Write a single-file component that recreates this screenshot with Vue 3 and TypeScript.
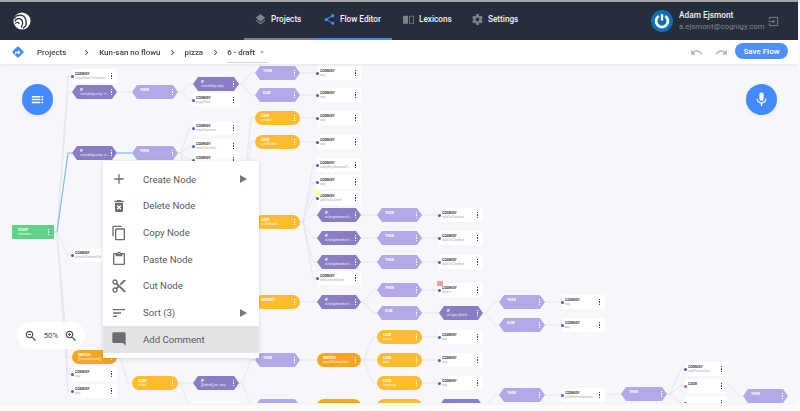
<script setup lang="ts">
type Kind = 'cog' | 'cook' | 'then' | 'if' | 'case' | 'switch' | 'start'
interface FlowNode { id: string; kind: Kind; col: number; cy: number; label: string; sub: string; parent?: string; active?: boolean }

const columns: [number, number][] = [
  [12, 42], [72, 45], [132, 46], [193, 46], [255, 45], [317, 44], [377, 45],
  [439, 44], [499, 46], [562, 43], [621, 46], [685, 42], [743, 45]
]
const TOP = 64

const nodes: FlowNode[] = [
  { id: 'start', kind: 'start', col: 0, cy: 232, label: 'START', sub: 'intentes' },
  { id: 'a1', kind: 'cog', col: 1, cy: 76, label: 'COGNIGY', sub: 'copyDataToContext', parent: 'start' },
  { id: 'a2', kind: 'if', col: 1, cy: 92, label: 'IF', sub: '<cmdelsp.city> +...', parent: 'start' },
  { id: 'a3', kind: 'if', col: 1, cy: 153, label: 'IF', sub: '<cmdelsp.city> =...', parent: 'start', active: true },
  { id: 'a4', kind: 'cog', col: 1, cy: 255, label: 'COGNIGY', sub: 'checkChannelOn', parent: 'start' },
  { id: 'a5', kind: 'switch', col: 1, cy: 357, label: 'SWITCH', sub: '[[currentState]]', parent: 'start' },
  { id: 'a6', kind: 'cog', col: 1, cy: 374, label: 'COGNIGY', sub: 'say', parent: 'start' },
  { id: 'a7', kind: 'cog', col: 1, cy: 391, label: 'COGNIGY', sub: 'say', parent: 'start' },

  { id: 'b1', kind: 'then', col: 2, cy: 92, label: 'THEN', sub: '', parent: 'a2' },
  { id: 'b2', kind: 'then', col: 2, cy: 153, label: 'THEN', sub: '', parent: 'a3', active: true },
  { id: 'b3', kind: 'case', col: 2, cy: 383, label: 'CASE', sub: 'order', parent: 'a5' },

  { id: 'c1', kind: 'if', col: 3, cy: 84, label: 'IF', sub: '<cmdelsp.city>', parent: 'b1' },
  { id: 'c2', kind: 'cog', col: 3, cy: 100, label: 'COGNIGY', sub: 'copyPlain', parent: 'b1' },
  { id: 'c3', kind: 'cog', col: 3, cy: 128, label: 'COGNIGY', sub: 'resetContext', parent: 'b2' },
  { id: 'c4', kind: 'cog', col: 3, cy: 146, label: 'COGNIGY', sub: 'resetContext', parent: 'b2' },
  { id: 'c5', kind: 'cog', col: 3, cy: 160, label: 'COGNIGY', sub: '', parent: 'b2' },
  { id: 'c6', kind: 'switch', col: 3, cy: 210, label: '', sub: '', parent: 'b2' },
  { id: 'c7', kind: 'if', col: 3, cy: 383, label: 'IF', sub: '[[intent]] == \'any...', parent: 'b3' },
  { id: 'c8', kind: 'cog', col: 3, cy: 408, label: '', sub: '', parent: 'b3' },

  { id: 'd1', kind: 'then', col: 4, cy: 73, label: 'THEN', sub: '', parent: 'c1' },
  { id: 'd2', kind: 'then', col: 4, cy: 95, label: 'ELSE', sub: '', parent: 'c1' },
  { id: 'd3', kind: 'case', col: 4, cy: 118, label: 'CASE', sub: 'empty1', parent: 'c6' },
  { id: 'd4', kind: 'case', col: 4, cy: 142, label: 'CASE', sub: 'wantOrder', parent: 'c6' },
  { id: 'd5', kind: 'case', col: 4, cy: 222, label: 'CASE', sub: 'orderFood', parent: 'c6' },
  { id: 'd6', kind: 'case', col: 4, cy: 302, label: 'DEFAULT', sub: '', parent: 'c6' },
  { id: 'd7', kind: 'then', col: 4, cy: 360, label: 'THEN', sub: '', parent: 'c7' },
  { id: 'd8', kind: 'then', col: 4, cy: 406, label: '', sub: '', parent: 'c7' },

  { id: 'e1', kind: 'cog', col: 5, cy: 73, label: 'COGNIGY', sub: 'say', parent: 'd1' },
  { id: 'e2', kind: 'cog', col: 5, cy: 95, label: 'COGNIGY', sub: 'say', parent: 'd2' },
  { id: 'e3', kind: 'cog', col: 5, cy: 118, label: 'COGNIGY', sub: 'say', parent: 'd3' },
  { id: 'e4', kind: 'cog', col: 5, cy: 142, label: 'COGNIGY', sub: 'say', parent: 'd4' },
  { id: 'e5', kind: 'cog', col: 5, cy: 165, label: 'COGNIGY', sub: 'copyKeyphrasesT...', parent: 'd5' },
  { id: 'e6', kind: 'cog', col: 5, cy: 182, label: 'COGNIGY', sub: 'say', parent: 'd5' },
  { id: 'e7', kind: 'cog', col: 5, cy: 198, label: 'COGNIGY', sub: 'addToContext', parent: 'd5' },
  { id: 'e8', kind: 'if', col: 5, cy: 215, label: 'IF', sub: 'ci.keyphrases.fi...', parent: 'd5' },
  { id: 'e9', kind: 'if', col: 5, cy: 238, label: 'IF', sub: 'ci.keyphrases.fi...', parent: 'd5' },
  { id: 'e10', kind: 'if', col: 5, cy: 262, label: 'IF', sub: 'ci.keyphrases.fi...', parent: 'd5' },
  { id: 'e11', kind: 'cog', col: 5, cy: 278, label: 'COGNIGY', sub: 'setCurrentState', parent: 'd5' },
  { id: 'e12', kind: 'if', col: 5, cy: 302, label: 'IF', sub: 'ci.keyphrases.fi...', parent: 'd6' },
  { id: 'e13', kind: 'switch', col: 5, cy: 360, label: 'SWITCH', sub: 'numMissingSlot', parent: 'd7' },
  { id: 'e14', kind: 'switch', col: 5, cy: 406, label: '', sub: '', parent: 'd8' },

  { id: 'f1', kind: 'then', col: 6, cy: 215, label: 'THEN', sub: '', parent: 'e8' },
  { id: 'f2', kind: 'then', col: 6, cy: 238, label: 'THEN', sub: '', parent: 'e9' },
  { id: 'f3', kind: 'then', col: 6, cy: 262, label: 'THEN', sub: '', parent: 'e10' },
  { id: 'f4', kind: 'then', col: 6, cy: 290, label: 'THEN', sub: '', parent: 'e12' },
  { id: 'f5', kind: 'then', col: 6, cy: 313, label: 'ELSE', sub: '', parent: 'e12' },
  { id: 'f6', kind: 'case', col: 6, cy: 337, label: 'CASE', sub: 'small', parent: 'e13' },
  { id: 'f7', kind: 'case', col: 6, cy: 360, label: 'CASE', sub: 'size', parent: 'e13' },
  { id: 'f8', kind: 'case', col: 6, cy: 383, label: 'CASE', sub: 'toppings', parent: 'e13' },
  { id: 'f9', kind: 'case', col: 6, cy: 406, label: '', sub: '', parent: 'e14' },

  { id: 'g1', kind: 'cog', col: 7, cy: 215, label: 'COGNIGY', sub: 'addToContext', parent: 'f1' },
  { id: 'g2', kind: 'cog', col: 7, cy: 238, label: 'COGNIGY', sub: 'addToContext', parent: 'f2' },
  { id: 'g3', kind: 'cog', col: 7, cy: 262, label: 'COGNIGY', sub: 'addToContext', parent: 'f3' },
  { id: 'g4', kind: 'cog', col: 7, cy: 290, label: 'COGNIGY', sub: 'Share', parent: 'f4' },
  { id: 'g5', kind: 'if', col: 7, cy: 313, label: 'IF', sub: 'ci.type.(drink\'...', parent: 'f5' },
  { id: 'g6', kind: 'cog', col: 7, cy: 337, label: 'COGNIGY', sub: 'say', parent: 'f6' },
  { id: 'g7', kind: 'cog', col: 7, cy: 360, label: 'COGNIGY', sub: 'say', parent: 'f7' },
  { id: 'g8', kind: 'cog', col: 7, cy: 383, label: 'COGNIGY', sub: 'say', parent: 'f8' },
  { id: 'g9', kind: 'if', col: 7, cy: 406, label: '', sub: '', parent: 'f9' },

  { id: 'h1', kind: 'then', col: 8, cy: 302, label: 'THEN', sub: '', parent: 'g5' },
  { id: 'h2', kind: 'then', col: 8, cy: 325, label: 'ELSE', sub: '', parent: 'g5' },
  { id: 'h3', kind: 'then', col: 8, cy: 395, label: 'THEN', sub: '', parent: 'g9' },

  { id: 'i1', kind: 'cog', col: 9, cy: 302, label: 'COGNIGY', sub: 'say', parent: 'h1' },
  { id: 'i2', kind: 'cog', col: 9, cy: 325, label: 'COGNIGY', sub: 'say', parent: 'h2' },
  { id: 'i3', kind: 'cog', col: 9, cy: 395, label: 'COGNIGY', sub: 'addGenericQuesti...', parent: 'h3' },

  { id: 'j1', kind: 'then', col: 10, cy: 394, label: 'THEN', sub: '', parent: 'i3' },

  { id: 'k1', kind: 'cog', col: 11, cy: 369, label: 'COGNIGY', sub: 'addToContext', parent: 'j1' },
  { id: 'k2', kind: 'cook', col: 11, cy: 386, label: 'COOK', sub: '', parent: 'j1' },
  { id: 'k3', kind: 'cog', col: 11, cy: 403, label: '', sub: '', parent: 'j1' },

  { id: 'l1', kind: 'then', col: 12, cy: 396, label: 'THEN', sub: '', parent: 'k2' }
]

const byId = new Map(nodes.map((n) => [n.id, n]))

function nodeStyle(n: FlowNode) {
  const [x, w] = columns[n.col]
  return { left: `${x}px`, top: `${n.cy - 7 - TOP}px`, width: `${w}px` }
}

const edges = nodes.filter((n) => n.parent).map((n) => {
  const p = byId.get(n.parent as string) as FlowNode
  const [px, pw] = columns[p.col]
  const x1 = px + pw
  const x2 = columns[n.col][0]
  const y1 = p.cy - TOP
  const y2 = n.cy - TOP
  return { id: n.id, active: !!n.active, d: `M${x1} ${y1}L${x1 + 3} ${y1}L${x2 - 4} ${y2}L${x2} ${y2}` }
})

const tabs = [
  { name: 'Projects', icon: 'M11.99 18.54l-7.37-5.73L3 14.07l9 7 9-7-1.63-1.27-7.38 5.74zM12 16l7.36-5.73L21 9l-9-7-9 7 1.63 1.27L12 16z', state: 'hover' },
  { name: 'Flow Editor', icon: 'M18 16.08c-.76 0-1.44.3-1.96.77L8.91 12.7c.05-.23.09-.46.09-.7s-.04-.47-.09-.7l7.05-4.11c.54.5 1.25.81 2.04.81 1.66 0 3-1.34 3-3s-1.34-3-3-3-3 1.34-3 3c0 .24.04.47.09.7L8.04 9.81C7.5 9.31 6.79 9 6 9c-1.66 0-3 1.34-3 3s1.34 3 3 3c.79 0 1.5-.31 2.04-.81l7.12 4.16c-.05.21-.08.43-.08.65 0 1.61 1.31 2.92 2.92 2.92 1.61 0 2.92-1.31 2.92-2.92s-1.31-2.92-2.92-2.92z', state: 'active' },
  { name: 'Lexicons', icon: 'M2 5h9v15H2zM13 5h9v15h-9zm1.5 1.5v12h6v-12z', state: '' },
  { name: 'Settings', icon: 'M19.43 12.98c.04-.32.07-.64.07-.98s-.03-.66-.07-.98l2.11-1.65c.19-.15.24-.42.12-.64l-2-3.46c-.12-.22-.39-.3-.61-.22l-2.49 1c-.52-.4-1.08-.73-1.69-.98l-.38-2.65C14.46 2.18 14.25 2 14 2h-4c-.25 0-.46.18-.49.42l-.38 2.65c-.61.25-1.17.59-1.69.98l-2.49-1c-.23-.09-.49 0-.61.22l-2 3.46c-.13.22-.07.49.12.64l2.11 1.65c-.04.32-.07.65-.07.98s.03.66.07.98l-2.11 1.65c-.19.15-.24.42-.12.64l2 3.46c.12.22.39.3.61.22l2.49-1c.52.4 1.08.73 1.69.98l.38 2.65c.03.24.24.42.49.42h4c.25 0 .46-.18.49-.42l.38-2.65c.61-.25 1.17-.59 1.69-.98l2.49 1c.23.09.49 0 .61-.22l2-3.46c.12-.22.07-.49-.12-.64l-2.11-1.65zM12 15.5c-1.93 0-3.5-1.57-3.5-3.5s1.57-3.5 3.5-3.5 3.5 1.57 3.5 3.5-1.57 3.5-3.5 3.5z', state: '' }
]

const crumbs = ['Projects', 'Kun-san no flowu', 'pizza']

const menu = [
  { name: 'Create Node', more: true, icon: 'M19 13h-6v6h-2v-6H5v-2h6V5h2v6h6v2z' },
  { name: 'Delete Node', more: false, icon: 'M6 19c0 1.1.9 2 2 2h8c1.1 0 2-.9 2-2V7H6v12zm2.46-7.12l1.41-1.41L12 12.59l2.12-2.12 1.41 1.41L13.41 14l2.12 2.12-1.41 1.41L12 15.41l-2.12 2.12-1.41-1.41L10.59 14l-2.13-2.12zM15.5 4l-1-1h-5l-1 1H5v2h14V4z' },
  { name: 'Copy Node', more: false, icon: 'M16 1H4c-1.1 0-2 .9-2 2v14h2V3h12V1zm3 4H8c-1.1 0-2 .9-2 2v14c0 1.1.9 2 2 2h11c1.1 0 2-.9 2-2V7c0-1.1-.9-2-2-2zm0 16H8V7h11v14z' },
  { name: 'Paste Node', more: false, icon: 'M19 3h-4.18C14.4 1.84 13.3 1 12 1c-1.3 0-2.4.84-2.82 2H5c-1.1 0-2 .9-2 2v14c0 1.1.9 2 2 2h14c1.1 0 2-.9 2-2V5c0-1.1-.9-2-2-2zm-7 0c.55 0 1 .45 1 1s-.45 1-1 1-1-.45-1-1 .45-1 1-1zm7 16H5V5h2v3h10V5h2v14z' },
  { name: 'Cut Node', more: false, icon: 'M9.64 7.64c.23-.5.36-1.05.36-1.64 0-2.21-1.79-4-4-4S2 3.79 2 6s1.79 4 4 4c.59 0 1.14-.13 1.64-.36L10 12l-2.36 2.36C7.14 14.13 6.59 14 6 14c-2.21 0-4 1.79-4 4s1.79 4 4 4 4-1.79 4-4c0-.59-.13-1.14-.36-1.64L12 14l7 7h3v-1L9.64 7.64zM6 8c-1.1 0-2-.89-2-2s.9-2 2-2 2 .89 2 2-.9 2-2 2zm0 12c-1.1 0-2-.89-2-2s.9-2 2-2 2 .89 2 2-.9 2-2 2zm6-7.5c-.28 0-.5-.22-.5-.5s.22-.5.5-.5.5.22.5.5-.22.5-.5.5zM19 3l-6 6 2 2 7-7V3z' },
  { name: 'Sort (3)', more: true, icon: 'M3 18h6v-2H3v2zM3 6v2h18V6H3zm0 7h12v-2H3v2z' },
  { name: 'Add Comment', more: false, icon: 'M21.99 4c0-1.1-.89-2-1.99-2H4c-1.1 0-2 .9-2 2v12c0 1.1.9 2 2 2h14l4 4-.01-18z', hot: true }
]

const searchIcon = 'M15.5 14h-.79l-.28-.27C15.41 12.59 16 11.11 16 9.5 16 5.91 13.09 3 9.5 3S3 5.91 3 9.5 5.91 16 9.5 16c1.61 0 3.09-.59 4.23-1.57l.27.28v.79l5 4.99L20.49 19l-4.99-5zm-6 0C7.01 14 5 11.99 5 9.5S7.01 5 9.5 5 14 7.01 14 9.5 11.99 14 9.5 14z'
</script>

<template>
  <div class="page">
    <div class="app">
      <header class="topbar">
        <svg class="logo" viewBox="0 0 20 20">
          <circle cx="10" cy="10" r="9.5" fill="#fff" />
          <path d="M1.500 7.500C4 2 12 2 14 8s-1 9-3 10" fill="none" stroke="#252e3a" stroke-width="1.500" />
          <path d="M2 10.500C4 6 9.500 6.500 10.500 10.500s-.5 5-1.500 6.500" fill="none" stroke="#252e3a" stroke-width="1.400" />
          <path d="M2.500 13C4 10.500 6.500 11 7 13.500" fill="none" stroke="#252e3a" stroke-width="1.300" />
        </svg>
        <nav class="tabs">
          <div v-for="t in tabs" :key="t.name" class="tab" :class="t.state">
            <svg class="tab-icon" viewBox="0 0 24 24"><path :d="t.icon" /></svg>
            <span>{{ t.name }}</span>
          </div>
        </nav>
        <div class="user">
          <svg class="avatar" viewBox="0 0 24 24">
            <circle cx="12" cy="12" r="12" fill="#0d70b2" />
            <path d="M8.500 6.600a6.500 6.500 0 1 0 7 0" fill="none" stroke="#fff" stroke-width="3" />
            <path d="M12 4.500v7" stroke="#fff" stroke-width="2.600" />
          </svg>
          <div class="who">
            <div class="name">Adam Ejsmont</div>
            <div class="mail">a.ejsmont@cognigy.com</div>
          </div>
          <svg class="logout" viewBox="0 0 24 24" fill="none" stroke="#8a9098" stroke-width="1.800">
            <path d="M3 8V3h18v18H3v-5" />
            <path d="M1 12h13M10.500 8l4 4-4 4" />
          </svg>
        </div>
      </header>

      <div class="toolbar">
        <svg class="flow-mark" viewBox="0 0 24 24">
          <rect x="4.500" y="4.500" width="15" height="15" rx="2" transform="rotate(45 12 12)" fill="#448aff" />
          <path d="M8 16v-3.500h6M12 9.500l3 3-3 3" fill="none" stroke="#fff" stroke-width="2" />
        </svg>
        <template v-for="c in crumbs" :key="c">
          <span class="crumb">{{ c }}</span>
          <svg class="chev" viewBox="0 0 24 24"><path d="M10 6L8.590 7.410 13.170 12l-4.580 4.590L10 18l6-6z" /></svg>
        </template>
        <div class="version"><span>6 - draft</span><i class="caret"></i></div>
        <div class="spacer"></div>
        <svg class="hist" viewBox="0 0 24 24"><path d="M12.500 8c-2.650 0-5.050.99-6.900 2.600L2 7v9h9l-3.620-3.620c1.390-1.160 3.160-1.880 5.120-1.880 3.540 0 6.550 2.310 7.600 5.500l2.370-.78C21.080 11.030 17.150 8 12.500 8z" /></svg>
        <svg class="hist redo" viewBox="0 0 24 24"><path d="M18.400 10.600C16.550 8.990 14.150 8 11.500 8c-4.650 0-8.580 3.030-9.960 7.220L3.900 16c1.050-3.190 4.050-5.500 7.600-5.500 1.950 0 3.730.72 5.120 1.880L13 16h9V7l-3.600 3.600z" /></svg>
        <button class="save">Save Flow</button>
      </div>

      <main class="canvas">
        <svg class="wires" width="798" height="345">
          <path v-for="e in edges" :key="e.id" :d="e.d" :class="{ on: e.active }" />
        </svg>

        <div v-for="n in nodes" :key="n.id" class="node" :class="n.kind" :style="nodeStyle(n)">
          <i v-if="n.kind === 'cog' || n.kind === 'cook'" class="dot"></i>
          <div class="txt">
            <b>{{ n.label }}</b>
            <small>{{ n.sub }}</small>
          </div>
          <i class="kebab"></i>
        </div>

        <i class="note yellow"></i>
        <i class="note red"></i>

        <button class="fab fab-left">
          <svg viewBox="0 0 24 24" fill="#fff"><path d="M4 7h12v2.200H4zM4 11h12v2.200H4zM4 15h12v2.200H4zM17.500 7H20v2.200h-2.500zM17.500 11H20v2.200h-2.500zM17.500 15H20v2.200h-2.500z" /></svg>
        </button>
        <button class="fab fab-right">
          <svg viewBox="0 0 24 24" fill="#fff"><path d="M12 14c1.660 0 2.990-1.340 2.990-3L15 5c0-1.660-1.340-3-3-3S9 3.340 9 5v6c0 1.660 1.340 3 3 3zm5.300-3c0 3-2.540 5.100-5.300 5.100S6.700 14 6.700 11H5c0 3.410 2.720 6.230 6 6.720V21h2v-3.280c3.280-.48 6-3.300 6-6.720h-1.700z" /></svg>
        </button>

        <div class="zoom">
          <svg viewBox="0 0 24 24"><path :d="searchIcon" /><path d="M7 8.700h5v1.600H7z" /></svg>
          <span>50%</span>
          <svg viewBox="0 0 24 24"><path :d="searchIcon" /><path d="M7 8.700h1.700V7h1.600v1.700H12v1.600h-1.700V12H8.700v-1.700H7z" /></svg>
        </div>

        <ul class="menu">
          <li v-for="m in menu" :key="m.name" :class="{ hot: m.hot }">
            <svg class="m-icon" viewBox="0 0 24 24"><path :d="m.icon" /></svg>
            <span>{{ m.name }}</span>
            <i v-if="m.more" class="more"></i>
          </li>
        </ul>
      </main>
    </div>
  </div>
</template>

<style>
html, body { background: #fff; margin: 0; }
</style>

<style scoped>
.page { width: 800px; height: 411px; background: #fcfcfc; overflow: hidden; }
.app {
  width: 798px;
  height: 403px;
  display: flex;
  flex-direction: column;
  overflow: hidden;
  font-family: Roboto, "Noto Sans", sans-serif;
  filter: blur(0.35px);
  border-top: 2px solid #a3a5a8;
  box-sizing: border-box;
  box-shadow: 0 1px 3px rgba(0, 0, 0, .05);
}
.topbar {
  height: 38px;
  flex: none;
  background: #252e3a;
  display: flex;
  align-items: stretch;
  position: relative;
}
.logo { width: 18px; height: 18px; margin: 10px 0 0 13px; }
.tabs { display: flex; margin-left: 213px; }
.tab {
  display: flex;
  align-items: center;
  box-sizing: border-box;
  height: 38px;
  padding: 0 0 2px 10px;
  gap: 4px;
  color: #f1f2f4;
  font-size: 8.200px;
  font-weight: 500;
  border-bottom: 2px solid transparent;
  width: 69px;
}
.tab:nth-child(2) { width: 79px; }
.tab-icon { width: 13px; height: 13px; fill: #7d838c; flex: none; }
.tab.hover { border-bottom-color: #7e848c; }
.tab.active { border-bottom-color: #448aff; }
.tab.active .tab-icon { fill: #448aff; }
.user { position: absolute; left: 651px; top: 8px; display: flex; align-items: center; }
.avatar { width: 22px; height: 22px; }
.who { margin-left: 6px; line-height: 11px; width: 80px; white-space: nowrap; }
.name { color: #f1f2f4; font-size: 8.300px; font-weight: 500; }
.mail { color: #7f8791; font-size: 7.800px; }
.logout { width: 11px; height: 11px; margin-left: 9px; }

.toolbar {
  height: 24px;
  flex: none;
  background: #fff;
  box-shadow: 0 1px 3px rgba(0, 0, 0, .07);
  display: flex;
  align-items: center;
  position: relative;
  z-index: 2;
  color: #3d434b;
  font-size: 7.900px;
  font-weight: 500;
}
.flow-mark { width: 14px; height: 14px; margin-left: 11px; margin-right: 12px; flex: none; }
.crumb { white-space: nowrap; }
.chev { width: 11px; height: 11px; fill: #4b5058; margin: 0 6px 0 7px; flex: none; }
.crumb:first-of-type + .chev { margin: 0 7px 0 15px; }
.version {
  display: flex;
  align-items: center;
  height: 18px;
  width: 41px;
  border-bottom: 1px solid #d3d5d8;
  margin-top: 2px;
  white-space: nowrap;
}
.caret {
  margin-left: 5px;
  border: 2.500px solid transparent;
  border-top: 3px solid #b4b7bb;
  border-bottom: 0;
}
.spacer { flex: 1; }
.hist { width: 13px; height: 13px; fill: #b4b6b9; margin-right: 12px; }
.redo { margin-right: 7px; }
.save {
  width: 53px;
  height: 16px;
  margin: -2px 10px 0 0;
  padding: 0;
  border: 0;
  border-radius: 8px;
  background: #4f8ffb;
  color: #fff;
  font: 500 8px Roboto, sans-serif;
}

.canvas { flex: 1; position: relative; background: #f6f7fa; overflow: hidden; }
.wires { position: absolute; left: 0; top: 0; }
.wires path { fill: none; stroke: #e5e7ea; stroke-width: 1; }
.wires path.on { stroke: #74bdfb; stroke-width: 1.200; }

.node {
  position: absolute;
  height: 14px;
  display: flex;
  align-items: center;
  box-sizing: border-box;
  padding: 0 3px 0 6px;
  color: #fff;
}
.txt { flex: 1; min-width: 0; line-height: 4.500px; overflow: hidden; }
.txt b { display: block; min-height: 4.500px; font-size: 3.400px; font-weight: 700; white-space: nowrap; }
.txt small { display: block; min-height: 4.500px; font-size: 3.500px; white-space: nowrap; overflow: hidden; text-overflow: ellipsis; opacity: .85; }
.kebab {
  flex: none;
  width: 1.300px;
  height: 6px;
  margin-right: 2px;
  background: repeating-linear-gradient(#fff 0 1.200px, transparent 1.200px 2.400px);
}
.then, .if { clip-path: polygon(5px 0, calc(100% - 5px) 0, 100% 50%, calc(100% - 5px) 100%, 5px 100%, 0 50%); padding-left: 8px; }
.then { background: #b4a8e9; }
.if { background: #8a7cc5; }
.case { background: #ffbc33; border-radius: 7px; }
.switch { background: #f6a623; border-radius: 7px; }
.start { background: #60d288; border-radius: 1px; }
.cog, .cook { background: #fff; color: #333; border-radius: 1px; padding-left: 3px; }
.cog .txt small, .cook .txt small { color: #9a9da3; }
.cog .kebab, .cook .kebab { background: repeating-linear-gradient(#444 0 1.200px, transparent 1.200px 2.400px); }
.dot { position: absolute; left: -1px; top: 5.500px; width: 3px; height: 3px; border-radius: 50%; background: #3a62d8; }
.cook .dot { background: #ee5a5a; }

.note { position: absolute; width: 6px; height: 5px; }
.yellow { left: 315px; top: 126px; background: #ffff9e; }
.red { left: 437px; top: 217px; background: #ff9c9c; }

.fab {
  position: absolute;
  top: 20px;
  width: 31px;
  height: 31px;
  padding: 7px;
  border: 0;
  border-radius: 50%;
  background: #448aff;
  box-shadow: 0 1px 4px rgba(0, 0, 0, .08);
}
.fab svg { display: block; width: 17px; height: 17px; }
.fab-left { left: 22px; }
.fab-right { left: 746px; }

.zoom {
  position: absolute;
  left: 17px;
  top: 258px;
  width: 68px;
  height: 27px;
  border-radius: 14px;
  background: #fff;
  display: flex;
  align-items: center;
  justify-content: center;
  gap: 6px;
  font-size: 8px;
  color: #4a4f56;
  z-index: 4;
}
.zoom svg { width: 14px; height: 14px; fill: #4a4f56; }

.menu {
  position: absolute;
  left: 103px;
  top: 97px;
  width: 156px;
  margin: 0;
  padding: 5px 0;
  list-style: none;
  background: #fff;
  box-shadow: 0 1px 5px rgba(0, 0, 0, .12);
  box-sizing: border-box;
  z-index: 3;
}
.menu li {
  height: 26.670px;
  display: flex;
  align-items: center;
  padding-left: 8px;
  color: #555a60;
  font-size: 9.600px;
  position: relative;
}
.menu li.hot { background: #e4e4e4; }
.m-icon { width: 16px; height: 16px; fill: #6a6d71; margin-right: 16px; flex: none; }
.more {
  position: absolute;
  left: 137px;
  border-left: 7px solid #75787c;
  border-top: 4px solid transparent;
  border-bottom: 4px solid transparent;
}
</style>
